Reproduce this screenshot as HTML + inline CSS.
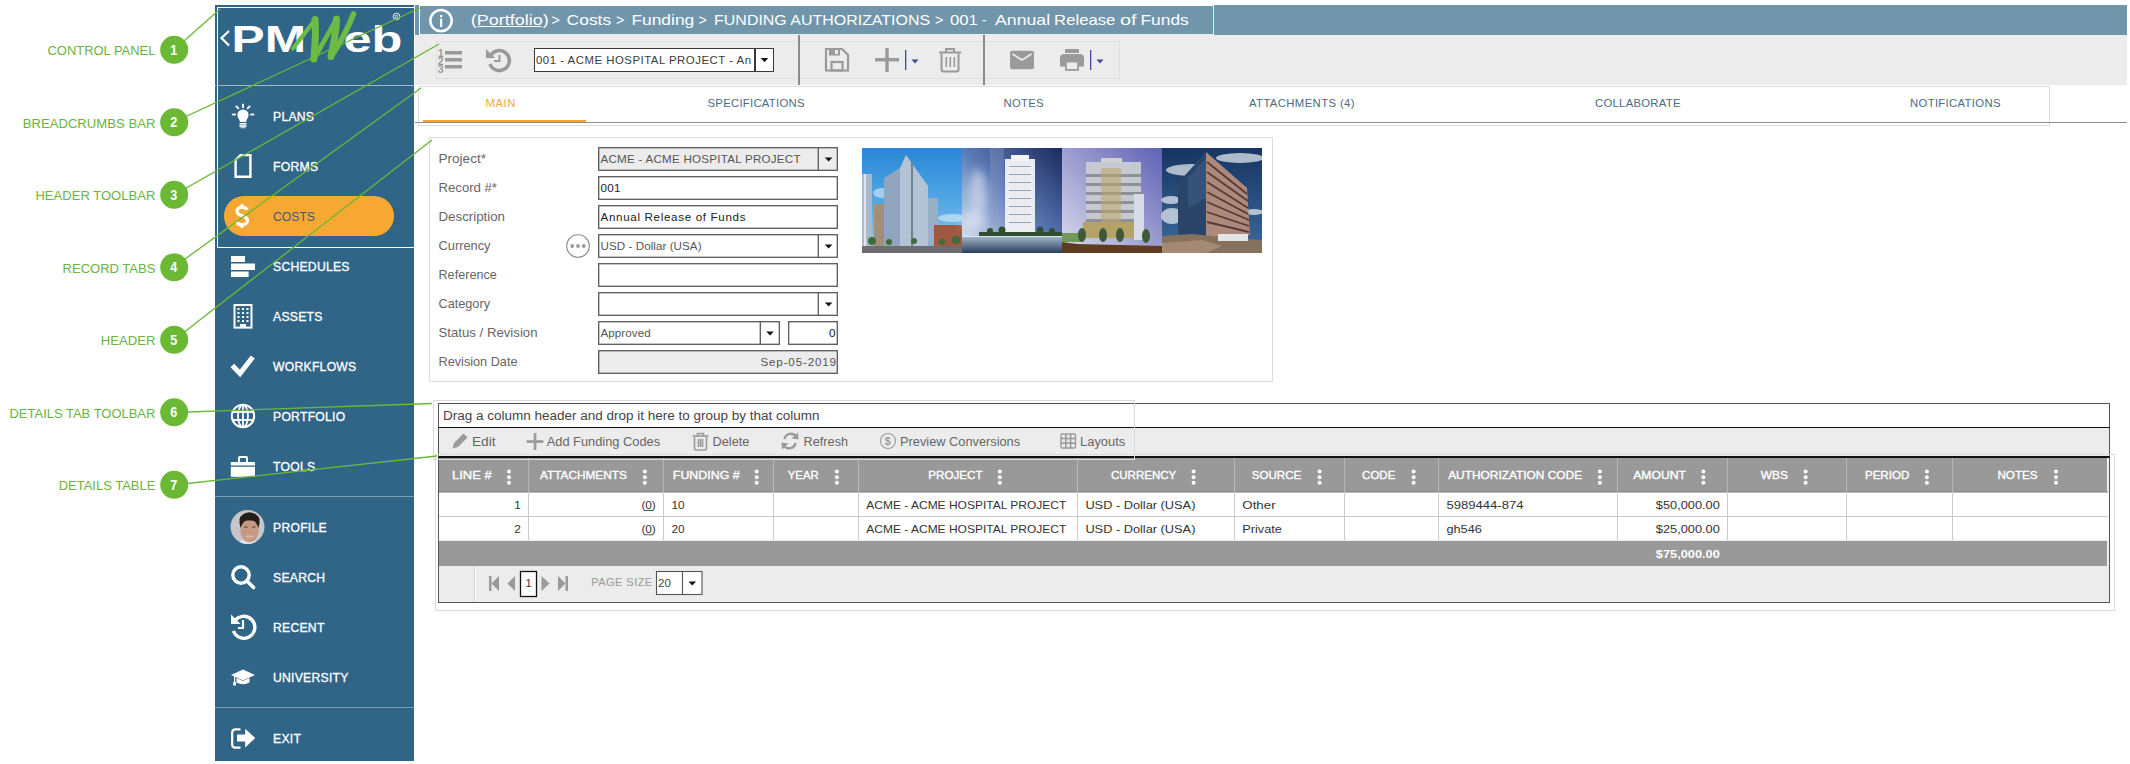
<!DOCTYPE html>
<html><head><meta charset="utf-8">
<style>
*{box-sizing:border-box;margin:0;padding:0}
html,body{width:2130px;height:764px;overflow:hidden;background:#fff}
body{position:relative;font-family:"Liberation Sans",sans-serif;color:#333}
.a{position:absolute}
.t{position:absolute;white-space:nowrap;line-height:1}
/* annotations */
.lbl{position:absolute;right:1975px;color:#6cb33f;font-size:14px;white-space:nowrap;line-height:1;letter-spacing:-0.2px}
.num{position:absolute;z-index:5;left:160px;width:28px;height:28px;border-radius:50%;background:#6cb33f;color:#fff;font-weight:bold;font-size:15px;text-align:center;line-height:28px}
/* sidebar */
#sb{position:absolute;left:215px;top:5px;width:199px;height:756px;background:#316588}
.mi{position:absolute;left:273px;color:#fff;font-weight:normal;-webkit-text-stroke:0.3px #fff;font-size:12.2px;letter-spacing:0.25px;line-height:1;white-space:nowrap}
.ic{position:absolute;left:12px;width:30px;height:30px}
/* breadcrumb */
.bc{background:#7196ab}
/* toolbar */
#tb{position:absolute;left:415px;top:34px;width:1712px;height:51px;background:#ececec}
/* tabs */
.tab{position:absolute;top:98px;color:#4a6c84;font-size:11px;line-height:1;white-space:nowrap;letter-spacing:0.3px}
/* form */
.fl{position:absolute;left:438px;color:#555;font-size:12px;line-height:1;white-space:nowrap}
.inp{position:absolute;left:598px;width:240px;height:23px;border:1px solid #444;background:#fff;font-size:11.5px;line-height:21px;padding-left:2px;color:#333;white-space:nowrap;overflow:hidden}
.dd{position:absolute;top:0;right:0;width:19px;height:21px;border-left:1px solid #444}
.dd:after{content:"";position:absolute;left:5px;top:8px;border-left:4px solid transparent;border-right:4px solid transparent;border-top:5px solid #222}
/* grid */
.gh{position:absolute;top:458px;height:34px;background:#999;}
.ght{position:absolute;top:470px;color:#fff;font-weight:bold;font-size:11px;line-height:1;white-space:nowrap}
.keb{position:absolute;top:470px;width:4px;height:15px}
.cell{position:absolute;font-size:11px;line-height:1;color:#222;white-space:nowrap}
</style></head>
<body>

<!-- ============ ANNOTATIONS ============ -->
<svg class="a" style="left:0;top:0" width="215" height="520"><g font-family="Liberation Sans" font-size="13.6" fill="#6cb33f">
 <text x="47.5" y="55.1" textLength="107.9" lengthAdjust="spacingAndGlyphs">CONTROL PANEL</text>
 <text x="22.7" y="127.6" textLength="132.7" lengthAdjust="spacingAndGlyphs">BREADCRUMBS BAR</text>
 <text x="35.4" y="200.1" textLength="120.0" lengthAdjust="spacingAndGlyphs">HEADER TOOLBAR</text>
 <text x="62.6" y="272.6" textLength="92.8" lengthAdjust="spacingAndGlyphs">RECORD TABS</text>
 <text x="100.7" y="345.1" textLength="54.7" lengthAdjust="spacingAndGlyphs">HEADER</text>
 <text x="9.5" y="417.6" textLength="145.9" lengthAdjust="spacingAndGlyphs">DETAILS TAB TOOLBAR</text>
 <text x="58.7" y="490.1" textLength="96.7" lengthAdjust="spacingAndGlyphs">DETAILS TABLE</text>
</g></svg>

<!-- ============ SIDEBAR ============ -->
<div id="sb"></div>
<svg class="a" style="left:0;top:0;pointer-events:none" width="2130" height="764">
<!-- white frame -->
<rect x="217.5" y="7.5" width="197" height="240" fill="none" stroke="#fff" stroke-width="1"/>
<line x1="215" y1="85.5" x2="414" y2="85.5" stroke="#9fb7c6" stroke-width="1"/>
<line x1="215" y1="496.5" x2="414" y2="496.5" stroke="#7f9fb5" stroke-width="1"/>
<line x1="215" y1="707.5" x2="414" y2="707.5" stroke="#7f9fb5" stroke-width="1"/>
<!-- logo -->
<polyline points="229,31 221.5,38 229,45.5" fill="none" stroke="#fff" stroke-width="2.2"/>
<text x="231.5" y="51.8" font-family="Liberation Sans" font-weight="bold" font-size="36.5" fill="#fff" textLength="74.5" lengthAdjust="spacingAndGlyphs">PM</text>
<text x="343.5" y="51.8" font-family="Liberation Sans" font-weight="bold" font-size="36.5" fill="#fff" textLength="59" lengthAdjust="spacingAndGlyphs">eb</text>
<g fill="none" stroke="#6cbb45" stroke-linecap="round" stroke-linejoin="round">
 <path d="M293,48.5 L314.5,20.5" stroke-width="4.2"/>
 <path d="M315,19.5 C316.5,33 314.5,49 313.8,59" stroke-width="7"/>
 <path d="M314.5,58 L336,20" stroke-width="4.6"/>
 <path d="M336.5,19 C336.5,33 332.5,47 331,56.5" stroke-width="7"/>
 <path d="M331.5,56 C341,42 348,28 353.5,14" stroke-width="5.6"/>
</g>
<circle cx="396.5" cy="16.5" r="3.3" fill="none" stroke="#fff" stroke-width="0.9"/>
<text x="394.6" y="18.6" font-family="Liberation Sans" font-size="5" fill="#fff">R</text>
<!-- costs pill -->
<rect x="224" y="196" width="170" height="40" rx="20" fill="#f6a832"/>
<!-- icons -->
<g fill="#fff">
 <!-- bulb -->
 <circle cx="243" cy="115" r="5.6"/>
 <path d="M238,116 L240,122 L246,122 L248,116 Z"/>
 <rect x="239.5" y="123" width="7" height="1.6"/>
 <rect x="239.5" y="125.2" width="7" height="1.6"/>
 <rect x="240.5" y="127.3" width="5" height="0.9"/>
 <rect x="242" y="103.8" width="2" height="4"/>
 <rect x="231.8" y="113.6" width="4" height="1.8"/>
 <rect x="250.2" y="113.6" width="4" height="1.8"/>
 <path d="M235.2,106.5 l1.3,-1.3 l3,3 l-1.3,1.3z"/>
 <path d="M250.8,106.5 l-1.3,-1.3 l-3,3 l1.3,1.3z"/>
 <!-- schedules -->
 <rect x="231" y="256" width="14" height="6"/>
 <rect x="231" y="263.5" width="24" height="6.5"/>
 <rect x="231" y="271.5" width="17.6" height="5.5"/>
 <!-- toolbox -->
 <path d="M238,462 v-4.2 q0,-1.8 1.8,-1.8 h6.4 q1.8,0 1.8,1.8 v4.2 h-2 v-4 h-6 v4z"/>
 <rect x="230.8" y="462" width="24.2" height="3.5"/>
 <rect x="230.8" y="466.8" width="24.2" height="10"/>
</g>
<g fill="none" stroke="#fff">
 <!-- forms doc -->
 <path d="M235.6,160 L240.5,155.1 L250.4,155.1 L250.4,176.8 L235.6,176.8 Z" stroke-width="2.4"/>
 <!-- assets building -->
 <rect x="234.5" y="305" width="17" height="22.6" stroke-width="2"/>
 <!-- check -->
 <polyline points="232.3,365.5 240,373.5 252.8,357" stroke-width="5"/>
 <!-- globe -->
 <circle cx="243" cy="416" r="11.2" stroke-width="2"/>
 <ellipse cx="243" cy="416" rx="5" ry="11.2" stroke-width="1.8"/>
 <line x1="243" y1="405" x2="243" y2="427" stroke-width="1.8"/>
 <line x1="232" y1="412" x2="254" y2="412" stroke-width="1.8"/>
 <line x1="232" y1="420" x2="254" y2="420" stroke-width="1.8"/>
 <!-- search -->
 <circle cx="241" cy="575" r="8.2" stroke-width="3.4"/>
 <line x1="247" y1="581" x2="253.5" y2="587.5" stroke-width="3.6" stroke-linecap="round"/>
 <!-- recent -->
 <path d="M234.5,621.5 A11,11 0 1 1 233.5,631" stroke-width="3.4"/>
 <polyline points="243,620 243,628 238,628" stroke-width="2.2"/>
 <!-- exit -->
 <path d="M240.5,729.3 h-5 q-3.3,0 -3.3,3.3 v11.8 q0,3.3 3.3,3.3 h5" stroke-width="2.2"/>
</g>
<g fill="#fff">
 <!-- assets windows -->
 <g>
 <rect x="237.5" y="308" width="2" height="2"/><rect x="242" y="308" width="2" height="2"/><rect x="246.5" y="308" width="2" height="2"/>
 <rect x="237.5" y="312" width="2" height="2"/><rect x="242" y="312" width="2" height="2"/><rect x="246.5" y="312" width="2" height="2"/>
 <rect x="237.5" y="316" width="2" height="2"/><rect x="242" y="316" width="2" height="2"/><rect x="246.5" y="316" width="2" height="2"/>
 <rect x="237.5" y="320" width="2" height="2"/><rect x="242" y="320" width="2" height="2"/><rect x="246.5" y="320" width="2" height="2"/>
 <rect x="240" y="324" width="6" height="4"/>
 </g>
 <!-- recent arrow -->
 <path d="M231,614.5 L231,624 L240.5,624 Z"/>
 <!-- grad cap -->
 <path d="M231,675 L243,669.5 L255,675 L243,680.5 Z"/>
 <path d="M236.5,678 v4.5 q6.5,3.5 13,0 v-4.5 l-6.5,3 z"/>
 <rect x="234" y="676" width="1.2" height="7"/>
 <rect x="233.2" y="682" width="2.8" height="3.5"/>
 <!-- exit arrow -->
 <path d="M237,734.6 h8.2 v-5.9 l10,9.4 l-10,9.4 v-5.9 h-8.2 z"/>
</g>
<!-- dollar -->
<path d="M247.2,209.8 C246,207.8 244.2,207.2 242,207.2 C238.8,207.2 237,209 237,211.3 C237,214 239.5,215 242,215.8 C245,216.7 247.5,217.8 247.5,220.6 C247.5,223.2 245.2,224.8 242,224.8 C239.2,224.8 237.2,223.6 236.2,221.5" fill="none" stroke="#fff" stroke-width="3.2"/>
<rect x="240.6" y="204" width="2.8" height="4" fill="#fff"/><rect x="240.6" y="224" width="2.8" height="4" fill="#fff"/>
<!-- avatar -->
<defs><clipPath id="av"><circle cx="247.5" cy="527" r="17"/></clipPath></defs>
<g clip-path="url(#av)">
 <rect x="229" y="509" width="38" height="37" fill="#c6c6ca"/>
 <path d="M236,548 q2,-9 12,-9 q10,0 12,9z" fill="#dfe5ec"/>
 <ellipse cx="249.5" cy="523" rx="10" ry="10.5" fill="#231d1b"/>
 <ellipse cx="249.5" cy="531" rx="9.2" ry="11.3" fill="#c49a84"/>
 <path d="M240,524 q0,-6 9.5,-6.5 q9.5,0.5 9.5,6.5 l0.5,-5 q-2,-6 -10,-6.5 q-8,0.5 -10,6.5z" fill="#231d1b"/>
 <rect x="240" y="517" width="19" height="3.5" fill="#231d1b"/>
 <ellipse cx="249.5" cy="536.5" rx="4" ry="1.3" fill="#d9b3a3"/>
 <rect x="244" y="526.5" width="3.5" height="1.2" fill="#6a4a40"/><rect x="252" y="526.5" width="3.5" height="1.2" fill="#6a4a40"/>
</g>
</svg>
<div class="mi" style="top:111.0px">PLANS</div>
<div class="mi" style="top:160.6px">FORMS</div>
<div class="mi" style="top:210.6px;color:#45597a;-webkit-text-stroke:0;letter-spacing:0">COSTS</div>
<div class="mi" style="top:260.6px">SCHEDULES</div>
<div class="mi" style="top:310.6px">ASSETS</div>
<div class="mi" style="top:360.6px">WORKFLOWS</div>
<div class="mi" style="top:410.6px">PORTFOLIO</div>
<div class="mi" style="top:460.6px">TOOLS</div>
<div class="mi" style="top:522.2px">PROFILE</div>
<div class="mi" style="top:572.2px">SEARCH</div>
<div class="mi" style="top:622.2px">RECENT</div>
<div class="mi" style="top:672.2px">UNIVERSITY</div>
<div class="mi" style="top:733.2px">EXIT</div>


<!-- ============ BREADCRUMB ============ -->
<div id="tb"></div>

<div class="a bc" style="left:415px;top:5px;width:4px;height:30px"></div>
<div class="a bc" style="left:420px;top:6px;width:793px;height:28px"></div>
<div class="a" style="left:1213px;top:6px;width:1px;height:28px;background:#e6e6e6"></div>
<div class="a bc" style="left:1214px;top:5px;width:913px;height:30px"></div>

<!-- ============ TOOLBAR ============ -->
<!-- toolbar groups -->
<div class="a" style="left:436px;top:41px;width:364px;height:38px;border:1px solid #dedede"></div>
<div class="a" style="left:799px;top:41px;width:321px;height:38px;border:1px solid #dedede;border-left:none"></div>
<div class="a" style="left:798px;top:35px;width:1.5px;height:50px;background:#8c8c8c"></div>
<div class="a" style="left:983px;top:35px;width:1.5px;height:50px;background:#8c8c8c"></div>
<div class="a" style="left:415px;top:85px;width:1712px;height:1px;background:#fafafa"></div>
<!-- record dropdown -->
<div class="a" style="left:534px;top:48px;width:240px;height:24px;border:1.5px solid #3a3a3a;background:#fff"></div>
<div class="a" style="left:754px;top:49px;width:1.5px;height:22px;background:#3a3a3a"></div>
<svg class="a" style="left:0;top:0" width="2130" height="130">
 <path d="M760.8,58 h7.4 l-3.7,4.2z" fill="#111"/>
 <text x="536" y="64" font-family="Liberation Sans" font-size="11.4" fill="#3a3a3a" textLength="215" lengthAdjust="spacing">001 - ACME HOSPITAL PROJECT - An</text>
 <!-- numbered list -->
 <g fill="#9a9a9a">
  <text x="437.8" y="57.0" font-family="Liberation Sans" font-weight="bold" font-size="10.5" textLength="6">1</text>
  <text x="437.8" y="65.0" font-family="Liberation Sans" font-weight="bold" font-size="10.5" textLength="6">2</text>
  <text x="437.8" y="73.0" font-family="Liberation Sans" font-weight="bold" font-size="10.5" textLength="6">3</text>
  <rect x="445" y="51" width="17" height="3.5"/>
  <rect x="445" y="58" width="17" height="3.5"/>
  <rect x="445" y="65" width="17" height="3.5"/>
 </g>
 <!-- history -->
 <g fill="none" stroke="#9a9a9a">
  <path d="M490.5,56 A10,10 0 1 1 490,64" stroke-width="3.6"/>
  <polyline points="499.5,55 499.5,61 494,61" stroke-width="2"/>
 </g>
 <path d="M486,49 L486,58 L495,58 Z" fill="#9a9a9a"/>
 <!-- save -->
 <g fill="none" stroke="#9a9a9a" stroke-width="2.2">
  <path d="M826,49 h16 l6,6 v15.5 h-22 z"/>
  <rect x="831.5" y="62" width="11" height="8.5"/>
 </g>
 <rect x="829" y="49" width="11" height="6.5" fill="#9a9a9a"/>
 <rect x="835" y="50" width="3" height="4" fill="#ececec"/>
 <!-- plus -->
 <rect x="875" y="58" width="24" height="3.4" fill="#9a9a9a"/>
 <rect x="885.3" y="48" width="3.4" height="24" fill="#9a9a9a"/>
 <rect x="905" y="50" width="1.3" height="20" fill="#3d4a9a"/>
 <path d="M911.5,59.5 h7 l-3.5,4z" fill="#3d4a9a"/>
 <!-- trash -->
 <g fill="none" stroke="#9a9a9a" stroke-width="2">
  <path d="M941.5,53.5 v16 q0,2 2,2 h13 q2,0 2,-2 v-16"/>
  <line x1="939" y1="52.5" x2="961" y2="52.5"/>
  <path d="M946,52 v-3 h8 v3"/>
  <line x1="946.3" y1="57" x2="946.3" y2="67" stroke-width="1.6"/>
  <line x1="950.3" y1="57" x2="950.3" y2="67" stroke-width="1.6"/>
  <line x1="954.3" y1="57" x2="954.3" y2="67" stroke-width="1.6"/>
 </g>
 <!-- mail -->
 <rect x="1010" y="50.7" width="24" height="18.6" rx="2.2" fill="#9a9a9a"/>
 <polyline points="1012.5,54 1022,60 1031.5,54" fill="none" stroke="#ececec" stroke-width="1.6"/>
 <!-- print -->
 <rect x="1065" y="49" width="14" height="4" fill="#9a9a9a"/>
 <path d="M1060,58 q0,-4 4,-4 h16 q4,0 4,4 v8.5 h-24z" fill="#9a9a9a"/>
 <rect x="1065" y="62" width="14" height="8.8" fill="#9a9a9a"/>
 <rect x="1066.8" y="62.5" width="10.4" height="6.5" fill="#ececec"/>
 <rect x="1090" y="50" width="1.3" height="20" fill="#3d4a9a"/>
 <path d="M1096.5,59.5 h7 l-3.5,4z" fill="#3d4a9a"/>
 <!-- info icon -->
 <circle cx="441" cy="20.6" r="10.7" fill="none" stroke="#fff" stroke-width="2.5"/>
 <rect x="440" y="15" width="2.2" height="2.4" fill="#fff"/>
 <rect x="440" y="18.8" width="2.2" height="8.2" fill="#fff"/>
 <!-- breadcrumb text -->
 <g font-family="Liberation Sans" font-size="14.4" fill="#fff">
  <text x="470.8" y="24.8" textLength="77.9" lengthAdjust="spacingAndGlyphs">(Portfolio)</text>
  <text x="551.4" y="24.8">&gt;</text>
  <text x="566.6" y="24.8" textLength="44.6" lengthAdjust="spacingAndGlyphs">Costs</text>
  <text x="616.1" y="24.8">&gt;</text>
  <text x="631.4" y="24.8" textLength="62.9" lengthAdjust="spacingAndGlyphs">Funding</text>
  <text x="698.4" y="24.8">&gt;</text>
  <text x="714.1" y="24.8" textLength="216.0" lengthAdjust="spacingAndGlyphs">FUNDING AUTHORIZATIONS</text>
  <text x="934.9" y="24.8">&gt;</text>
  <text x="949.9" y="24.8" textLength="27.9" lengthAdjust="spacingAndGlyphs">001</text>
  <text x="981.8" y="24.8">-</text>
  <text x="995.0" y="24.8" textLength="55.1" lengthAdjust="spacingAndGlyphs">Annual</text>
  <text x="1054.1" y="24.8" textLength="61.3" lengthAdjust="spacingAndGlyphs">Release</text>
  <text x="1119.9" y="24.8" textLength="16.6" lengthAdjust="spacingAndGlyphs">of</text>
  <text x="1140.5" y="24.8" textLength="48.2" lengthAdjust="spacingAndGlyphs">Funds</text>
 </g>
 <line x1="477.5" y1="26.5" x2="541.5" y2="26.5" stroke="#fff" stroke-width="1"/>
</svg>
<!-- tabs -->
<div class="a" style="left:418px;top:86px;width:1632px;height:40px;border:1px solid #dcdcdc;border-bottom-color:#dcdcdc;background:#fff"></div>
<div class="a" style="left:415px;top:122px;width:1712px;height:1px;background:#8e8e8e"></div>
<div class="a" style="left:423px;top:120px;width:163px;height:2px;background:#f5a231"></div>
<svg class="a" style="left:0;top:80px" width="2130" height="40">
 <g font-family="Liberation Sans" font-size="11.3" fill="#4a6d86">
  <text x="485.5" y="27.2" fill="#f5a54a" textLength="30" lengthAdjust="spacing">MAIN</text>
  <text x="707.5" y="27.2" textLength="97" lengthAdjust="spacing">SPECIFICATIONS</text>
  <text x="1003.5" y="27.2" textLength="40" lengthAdjust="spacing">NOTES</text>
  <text x="1249" y="27.2" textLength="105.5" lengthAdjust="spacing">ATTACHMENTS (4)</text>
  <text x="1595" y="27.2" textLength="85.5" lengthAdjust="spacing">COLLABORATE</text>
  <text x="1910" y="27.2" textLength="90.5" lengthAdjust="spacing">NOTIFICATIONS</text>
 </g>
</svg>



<!-- ============ FORM HEADER ============ -->
<div class="a" style="left:429px;top:137px;width:844px;height:245px;border:1px solid #dcdcdc;background:#fff"></div>
<svg class="a" style="left:0;top:130px" width="1300" height="260">
<g font-family="Liberation Sans" font-size="12.2" fill="#666">
 <text x="438.5" y="33.1" textLength="47.5" lengthAdjust="spacingAndGlyphs">Project*</text>
 <text x="438.5" y="62" textLength="58.5" lengthAdjust="spacingAndGlyphs">Record #*</text>
 <text x="438.5" y="91" textLength="66.5" lengthAdjust="spacingAndGlyphs">Description</text>
 <text x="438.5" y="120" textLength="52" lengthAdjust="spacingAndGlyphs">Currency</text>
 <text x="438.5" y="149" textLength="58.3" lengthAdjust="spacingAndGlyphs">Reference</text>
 <text x="438.5" y="178" textLength="51.5" lengthAdjust="spacingAndGlyphs">Category</text>
 <text x="438.5" y="207" textLength="99" lengthAdjust="spacingAndGlyphs">Status / Revision</text>
 <text x="438.5" y="236" textLength="79" lengthAdjust="spacingAndGlyphs">Revision Date</text>
</g>
<!-- inputs -->
<g stroke="#5a5a5a" stroke-width="1.3">
 <rect x="598.7" y="17.7" width="238.6" height="22.6" fill="#ececec"/>
 <rect x="598.7" y="46.7" width="238.6" height="22.6" fill="#fff"/>
 <rect x="598.7" y="75.7" width="238.6" height="22.6" fill="#fff"/>
 <rect x="598.7" y="104.7" width="238.6" height="22.6" fill="#fff"/>
 <rect x="598.7" y="133.7" width="238.6" height="22.6" fill="#fff"/>
 <rect x="598.7" y="162.7" width="238.6" height="22.6" fill="#fff"/>
 <rect x="598.7" y="191.7" width="180.6" height="22.6" fill="#fff"/>
 <rect x="788.7" y="191.7" width="48.6" height="22.6" fill="#fff"/>
 <rect x="598.7" y="220.7" width="238.6" height="22.6" fill="#ececec"/>
 <line x1="818.3" y1="18" x2="818.3" y2="40"/>
 <line x1="818.3" y1="105" x2="818.3" y2="127"/>
 <line x1="818.3" y1="163" x2="818.3" y2="185"/>
 <line x1="760.3" y1="192" x2="760.3" y2="214"/>
</g>
<g fill="#111">
 <path d="M824.8,27.6 h7.6 l-3.8,4z"/>
 <path d="M824.8,114.6 h7.6 l-3.8,4z"/>
 <path d="M824.8,172.6 h7.6 l-3.8,4z"/>
 <path d="M766.2,201.6 h7.6 l-3.8,4z"/>
</g>
<g font-family="Liberation Sans" font-size="11.6">
 <text x="600.5" y="33.1" fill="#555" textLength="200" lengthAdjust="spacing">ACME - ACME HOSPITAL PROJECT</text>
 <text x="600.5" y="62" fill="#222" textLength="20" lengthAdjust="spacing">001</text>
 <text x="600.5" y="91" fill="#222" textLength="145" lengthAdjust="spacing">Annual Release of Funds</text>
 <text x="600.5" y="120" fill="#555" textLength="101" lengthAdjust="spacing">USD - Dollar (USA)</text>
 <text x="600.5" y="207" fill="#555" textLength="50.2" lengthAdjust="spacing">Approved</text>
 <text x="835.5" y="207" fill="#222" text-anchor="end">0</text>
 <text x="760.5" y="236" fill="#555" textLength="75.5" lengthAdjust="spacing">Sep-05-2019</text>
</g>
<!-- ellipsis button -->
<circle cx="578" cy="116" r="11.3" fill="#fff" stroke="#8c8c8c" stroke-width="1.1"/>
<circle cx="572.2" cy="116" r="1.9" fill="#9a9a9a"/>
<circle cx="578" cy="116" r="1.9" fill="#9a9a9a"/>
<circle cx="583.8" cy="116" r="1.9" fill="#9a9a9a"/>
</svg>
<!-- images -->
<svg class="a" style="left:862px;top:148px" width="400" height="105">
<defs>
 <filter id="bl" x="-50%" y="-50%" width="200%" height="200%"><feGaussianBlur stdDeviation="4"/></filter>
 <linearGradient id="s1" x1="0" y1="0" x2="0" y2="1"><stop offset="0" stop-color="#2a86d6"/><stop offset="0.6" stop-color="#5aaee6"/><stop offset="1" stop-color="#9ccbe9"/></linearGradient>
 <linearGradient id="s2" x1="1" y1="0" x2="0" y2="1"><stop offset="0" stop-color="#1c2a5c"/><stop offset="0.5" stop-color="#5b7ab8"/><stop offset="1" stop-color="#e6eef8"/></linearGradient>
 <linearGradient id="s3" x1="1" y1="0" x2="0" y2="1"><stop offset="0" stop-color="#5e62b4"/><stop offset="0.6" stop-color="#aaaad6"/><stop offset="1" stop-color="#dcdcec"/></linearGradient>
 <linearGradient id="s4" x1="0" y1="0" x2="0" y2="1"><stop offset="0" stop-color="#173462"/><stop offset="1" stop-color="#3d6a9a"/></linearGradient>
 <linearGradient id="g1" x1="0" y1="0" x2="1" y2="0"><stop offset="0" stop-color="#8ea8c4"/><stop offset="0.55" stop-color="#b7c8da"/><stop offset="1" stop-color="#7d98b6"/></linearGradient>
 <linearGradient id="w2" x1="0" y1="0" x2="0" y2="1"><stop offset="0" stop-color="#9fb2c8"/><stop offset="1" stop-color="#2a3d5c"/></linearGradient>
</defs>
<!-- img1 -->
<rect x="0" y="0" width="100" height="105" fill="url(#s1)"/>
<g fill="#e8f2fa" opacity="0.55"><ellipse cx="90" cy="70" rx="14" ry="4"/><ellipse cx="20" cy="45" rx="9" ry="5"/></g>
<rect x="0" y="26" width="10" height="79" fill="#a9bacd"/>
<rect x="2" y="26" width="2" height="79" fill="#dfe6ee"/>
<rect x="12" y="56" width="10" height="46" fill="#a09078"/>
<path d="M22,30 L38,20 L38,100 L22,100 Z" fill="#8fa5be"/>
<path d="M38,20 L44,7 L66,38 L66,100 L38,100 Z" fill="#b2c3d6"/>
<rect x="49" y="14" width="2" height="86" fill="#6f8296"/>
<rect x="66" y="50" width="10" height="50" fill="#98b0c6"/>
<rect x="72" y="77" width="28" height="24" fill="#9e5a40"/>
<rect x="0" y="98" width="100" height="7" fill="#6e6c70"/>
<g fill="#3f6a3a"><circle cx="10" cy="93" r="4"/><circle cx="27" cy="94" r="3"/><circle cx="52" cy="93" r="3"/><circle cx="80" cy="94" r="3"/><circle cx="94" cy="92" r="4"/></g>
<!-- img2 -->
<rect x="100" y="0" width="100" height="105" fill="url(#s2)"/>
<rect x="143" y="11" width="30" height="79" fill="#e9edf2"/>
<rect x="149" y="7" width="18" height="6" fill="#f2f4f6"/>
<g fill="#9aa6b6"><rect x="147" y="18" width="22" height="1"/><rect x="147" y="26" width="22" height="1"/><rect x="147" y="34" width="22" height="1"/><rect x="147" y="42" width="22" height="1"/><rect x="147" y="50" width="22" height="1"/><rect x="147" y="58" width="22" height="1"/><rect x="147" y="66" width="22" height="1"/><rect x="147" y="74" width="22" height="1"/></g>
<rect x="128" y="0" width="14" height="105" fill="#8f9fc0" opacity="0.35"/><g fill="#eef3fa" opacity="0.5" filter="url(#bl)"><ellipse cx="116" cy="45" rx="9" ry="24"/><ellipse cx="112" cy="72" rx="12" ry="10"/></g>
<g fill="#2f4f30"><rect x="117" y="84" width="83" height="5"/><circle cx="128" cy="83" r="3"/><circle cx="140" cy="82" r="3.5"/><circle cx="178" cy="82" r="3.5"/><circle cx="190" cy="83" r="3"/></g><rect x="100" y="88" width="100" height="2" fill="#dfe6ee"/>
<rect x="100" y="89" width="100" height="16" fill="url(#w2)"/>
<!-- img3 -->
<rect x="200" y="0" width="100" height="105" fill="url(#s3)"/>
<rect x="200" y="85" width="20" height="9" fill="#6f9a5a"/>
<rect x="224" y="14" width="55" height="72" fill="#c7c9d2"/>
<rect x="239" y="10" width="21" height="5" fill="#cfd0d4"/>
<g fill="#8e9096"><rect x="224" y="26" width="55" height="3"/><rect x="224" y="35" width="55" height="3"/><rect x="224" y="44" width="55" height="3"/><rect x="224" y="53" width="55" height="3"/><rect x="224" y="62" width="55" height="3"/><rect x="224" y="71" width="55" height="3"/></g>
<rect x="239" y="20" width="20" height="56" fill="#b9a86e" opacity="0.55"/>
<rect x="221" y="74" width="51" height="16" fill="#b5a268"/>
<rect x="272" y="46" width="10" height="46" fill="#d6dbe6"/>
<g fill="#3f5a3a"><ellipse cx="220" cy="87" rx="4" ry="7"/><ellipse cx="241" cy="87" rx="4" ry="7"/><ellipse cx="258" cy="87" rx="4" ry="7"/><ellipse cx="284" cy="88" rx="4" ry="7"/></g>
<path d="M200,94 L215,96 L300,98 L300,105 L200,105Z" fill="#5e3c22"/>
<!-- img4 -->
<rect x="300" y="0" width="100" height="105" fill="url(#s4)"/>
<g fill="#dfe6ee" opacity="0.75"><ellipse cx="330" cy="22" rx="26" ry="6"/><ellipse cx="378" cy="10" rx="24" ry="5"/><ellipse cx="309" cy="52" rx="10" ry="4"/><ellipse cx="310" cy="68" rx="11" ry="8"/><ellipse cx="392" cy="64" rx="9" ry="3"/></g>
<path d="M344,4 L316,35 L316,90 L344,92 Z" fill="#2b4569"/>
<path d="M326,30 L344,10 L344,50 L326,60Z" fill="#3f5c84" opacity="0.6"/>
<path d="M344,4 L385,40 L388,87 L344,92 Z" fill="#ad897c"/>
<g stroke="#553a36" stroke-width="1.8"><line x1="345" y1="14" x2="385" y2="46"/><line x1="345" y1="24" x2="386" y2="53"/><line x1="345" y1="34" x2="386" y2="60"/><line x1="345" y1="44" x2="386" y2="66"/><line x1="345" y1="54" x2="387" y2="72"/><line x1="345" y1="64" x2="387" y2="78"/><line x1="345" y1="74" x2="387" y2="84"/></g>
<path d="M300,88 L330,86 L370,90 L400,92 L400,105 L300,105Z" fill="#86705e"/>
<path d="M300,95 L340,92 L360,98 L345,105 L300,105Z" fill="#a48a70"/>
<rect x="356" y="86" width="30" height="7" fill="#e4e4e6"/>
</svg>


<!-- ============ DETAILS GRID ============ -->
<div class="a" style="left:438px;top:403px;width:1672px;height:25px;border:1px solid #555;border-bottom:1.5px solid #111;background:#fff"></div>
<div class="a" style="left:438px;top:428px;width:1672px;height:30px;background:#ececec;border-left:1px solid #555;border-right:1px solid #555;border-bottom:2px solid #111"></div>
<div class="a" style="left:434.5px;top:454px;width:1680px;height:157px;border:1px solid #dcdcdc"></div>
<div class="a" style="left:438px;top:458px;width:1672px;height:145px;background:#ececec;border:1px solid #555;border-top:none"></div>
<div class="a" style="left:439px;top:458px;width:1669px;height:34px;background:#999;border-right:1px solid #f4f4f4"></div>
<div class="a" style="left:439px;top:492px;width:1670px;height:48px;background:#fff"></div>
<div class="a" style="left:439px;top:540.5px;width:1669px;height:25px;background:#999;border-right:1px solid #f4f4f4"></div>
<svg class="a" style="left:0;top:390px" width="2130" height="230">
<g stroke="#c9c9c9" stroke-width="1">
 <line x1="439" y1="126.5" x2="2108" y2="126.5"/>
 <line x1="439" y1="102" x2="2108" y2="102" stroke="#7a7a7a"/>

 <line x1="528.5" y1="68" x2="528.5" y2="102" stroke="#b5b5b5"/>
 <line x1="528.5" y1="102" x2="528.5" y2="150"/>
 <line x1="663.5" y1="68" x2="663.5" y2="102" stroke="#b5b5b5"/>
 <line x1="663.5" y1="102" x2="663.5" y2="150"/>
 <line x1="773.5" y1="68" x2="773.5" y2="102" stroke="#b5b5b5"/>
 <line x1="773.5" y1="102" x2="773.5" y2="150"/>
 <line x1="858.5" y1="68" x2="858.5" y2="102" stroke="#b5b5b5"/>
 <line x1="858.5" y1="102" x2="858.5" y2="150"/>
 <line x1="1077.5" y1="68" x2="1077.5" y2="102" stroke="#b5b5b5"/>
 <line x1="1077.5" y1="102" x2="1077.5" y2="150"/>
 <line x1="1234.5" y1="68" x2="1234.5" y2="102" stroke="#b5b5b5"/>
 <line x1="1234.5" y1="102" x2="1234.5" y2="150"/>
 <line x1="1344.5" y1="68" x2="1344.5" y2="102" stroke="#b5b5b5"/>
 <line x1="1344.5" y1="102" x2="1344.5" y2="150"/>
 <line x1="1438.5" y1="68" x2="1438.5" y2="102" stroke="#b5b5b5"/>
 <line x1="1438.5" y1="102" x2="1438.5" y2="150"/>
 <line x1="1617.5" y1="68" x2="1617.5" y2="102" stroke="#b5b5b5"/>
 <line x1="1617.5" y1="102" x2="1617.5" y2="150"/>
 <line x1="1727.5" y1="68" x2="1727.5" y2="102" stroke="#b5b5b5"/>
 <line x1="1727.5" y1="102" x2="1727.5" y2="150"/>
 <line x1="1846.5" y1="68" x2="1846.5" y2="102" stroke="#b5b5b5"/>
 <line x1="1846.5" y1="102" x2="1846.5" y2="150"/>
 <line x1="1952.5" y1="68" x2="1952.5" y2="102" stroke="#b5b5b5"/>
 <line x1="1952.5" y1="102" x2="1952.5" y2="150"/>
 <line x1="474.5" y1="176" x2="474.5" y2="212" stroke="#d6d6d6" stroke-width="1"/><line x1="475.5" y1="176" x2="475.5" y2="212" stroke="#fafafa" stroke-width="1"/>
</g>
<g font-family="Liberation Sans" font-size="11.3" fill="#fff" stroke="#fff" stroke-width="0.35">
 <text x="452.1" y="89.2" textLength="39.5" lengthAdjust="spacingAndGlyphs">LINE &#35;</text>
 <text x="540.1" y="89.2" textLength="86.7" lengthAdjust="spacingAndGlyphs">ATTACHMENTS</text>
 <text x="672.8" y="89.2" textLength="66.9" lengthAdjust="spacingAndGlyphs">FUNDING &#35;</text>
 <text x="787.8" y="89.2" textLength="30.9" lengthAdjust="spacingAndGlyphs">YEAR</text>
 <text x="928.3" y="89.2" textLength="54.3" lengthAdjust="spacingAndGlyphs">PROJECT</text>
 <text x="1111.0" y="89.2" textLength="65.2" lengthAdjust="spacingAndGlyphs">CURRENCY</text>
 <text x="1251.8" y="89.2" textLength="49.5" lengthAdjust="spacingAndGlyphs">SOURCE</text>
 <text x="1362.1" y="89.2" textLength="33.2" lengthAdjust="spacingAndGlyphs">CODE</text>
 <text x="1448.2" y="89.2" textLength="133.9" lengthAdjust="spacingAndGlyphs">AUTHORIZATION CODE</text>
 <text x="1633.2" y="89.2" textLength="52.8" lengthAdjust="spacingAndGlyphs">AMOUNT</text>
 <text x="1760.8" y="89.2" textLength="27.0" lengthAdjust="spacingAndGlyphs">WBS</text>
 <text x="1864.9" y="89.2" textLength="44.5" lengthAdjust="spacingAndGlyphs">PERIOD</text>
 <text x="1997.4" y="89.2" textLength="40.2" lengthAdjust="spacingAndGlyphs">NOTES</text>
</g><g fill="#fff">
 <circle cx="509" cy="81.6" r="2"/>
 <circle cx="509" cy="87.2" r="2"/>
 <circle cx="509" cy="92.8" r="2"/>
 <circle cx="644.8" cy="81.6" r="2"/>
 <circle cx="644.8" cy="87.2" r="2"/>
 <circle cx="644.8" cy="92.8" r="2"/>
 <circle cx="756.7" cy="81.6" r="2"/>
 <circle cx="756.7" cy="87.2" r="2"/>
 <circle cx="756.7" cy="92.8" r="2"/>
 <circle cx="836.9" cy="81.6" r="2"/>
 <circle cx="836.9" cy="87.2" r="2"/>
 <circle cx="836.9" cy="92.8" r="2"/>
 <circle cx="999.8" cy="81.6" r="2"/>
 <circle cx="999.8" cy="87.2" r="2"/>
 <circle cx="999.8" cy="92.8" r="2"/>
 <circle cx="1193.6" cy="81.6" r="2"/>
 <circle cx="1193.6" cy="87.2" r="2"/>
 <circle cx="1193.6" cy="92.8" r="2"/>
 <circle cx="1319.6" cy="81.6" r="2"/>
 <circle cx="1319.6" cy="87.2" r="2"/>
 <circle cx="1319.6" cy="92.8" r="2"/>
 <circle cx="1413.6" cy="81.6" r="2"/>
 <circle cx="1413.6" cy="87.2" r="2"/>
 <circle cx="1413.6" cy="92.8" r="2"/>
 <circle cx="1599.9" cy="81.6" r="2"/>
 <circle cx="1599.9" cy="87.2" r="2"/>
 <circle cx="1599.9" cy="92.8" r="2"/>
 <circle cx="1703.4" cy="81.6" r="2"/>
 <circle cx="1703.4" cy="87.2" r="2"/>
 <circle cx="1703.4" cy="92.8" r="2"/>
 <circle cx="1805.6" cy="81.6" r="2"/>
 <circle cx="1805.6" cy="87.2" r="2"/>
 <circle cx="1805.6" cy="92.8" r="2"/>
 <circle cx="1926.9" cy="81.6" r="2"/>
 <circle cx="1926.9" cy="87.2" r="2"/>
 <circle cx="1926.9" cy="92.8" r="2"/>
 <circle cx="2056" cy="81.6" r="2"/>
 <circle cx="2056" cy="87.2" r="2"/>
 <circle cx="2056" cy="92.8" r="2"/>
</g>
<g font-family="Liberation Sans" font-size="11.8" fill="#333">
 <text x="520.8" y="118.7" text-anchor="end">1</text>
 <text x="520.8" y="143" text-anchor="end">2</text>
 <text x="655.8" y="118.7" text-anchor="end" fill="#333">(0)</text>
 <text x="655.8" y="143" text-anchor="end" fill="#333">(0)</text>
 <line x1="644" y1="120.5" x2="653" y2="120.5" stroke="#333" stroke-width="0.8"/>
 <line x1="644" y1="144.8" x2="653" y2="144.8" stroke="#333" stroke-width="0.8"/>
 <text x="671.5" y="118.7">10</text>
 <text x="671.5" y="143">20</text>
 <text x="866.3" y="118.7" textLength="200" lengthAdjust="spacingAndGlyphs">ACME - ACME HOSPITAL PROJECT</text>
 <text x="866.3" y="143" textLength="200" lengthAdjust="spacingAndGlyphs">ACME - ACME HOSPITAL PROJECT</text>
 <text x="1085.4" y="118.7" textLength="110" lengthAdjust="spacingAndGlyphs">USD - Dollar (USA)</text>
 <text x="1085.4" y="143" textLength="110" lengthAdjust="spacingAndGlyphs">USD - Dollar (USA)</text>
 <text x="1242.3" y="118.7" textLength="33.3" lengthAdjust="spacingAndGlyphs">Other</text>
 <text x="1242.3" y="143" textLength="39.5" lengthAdjust="spacingAndGlyphs">Private</text>
 <text x="1446.4" y="118.7" textLength="77.2" lengthAdjust="spacingAndGlyphs">5989444-874</text>
 <text x="1446.4" y="143" textLength="35.5" lengthAdjust="spacingAndGlyphs">gh546</text>
 <text x="1655.8" y="118.7" textLength="64" lengthAdjust="spacingAndGlyphs">$50,000.00</text>
 <text x="1655.8" y="143" textLength="64" lengthAdjust="spacingAndGlyphs">$25,000.00</text>
</g>
<text x="1655.8" y="168.3" font-family="Liberation Sans" font-weight="bold" font-size="11.2" fill="#fff" textLength="64" lengthAdjust="spacingAndGlyphs">$75,000.00</text>
<!-- group panel + toolbar texts -->
<g font-family="Liberation Sans" font-size="12.3" fill="#444">
 <text x="443" y="30.2" textLength="376.5" lengthAdjust="spacingAndGlyphs">Drag a column header and drop it here to group by that column</text>
</g>
<g font-family="Liberation Sans" font-size="12.3" fill="#666">
 <text x="472" y="56.2" textLength="23.5" lengthAdjust="spacingAndGlyphs">Edit</text>
 <text x="546.7" y="56.2" textLength="113.5" lengthAdjust="spacingAndGlyphs">Add Funding Codes</text>
 <text x="712.6" y="56.2" textLength="36.8" lengthAdjust="spacingAndGlyphs">Delete</text>
 <text x="803.6" y="56.2" textLength="44.5" lengthAdjust="spacingAndGlyphs">Refresh</text>
 <text x="900.1" y="56.2" textLength="120" lengthAdjust="spacingAndGlyphs">Preview Conversions</text>
 <text x="1080" y="56.2" textLength="45.3" lengthAdjust="spacingAndGlyphs">Layouts</text>
</g>
<!-- toolbar icons -->
<g fill="#9a9a9a">
 <path d="M452.5,58.5 L454,53 L463.5,43.5 L467.5,47.5 L458,57 Z"/>
 <rect x="533.7" y="43" width="2.7" height="17"/>
 <rect x="526.7" y="50.2" width="16.6" height="2.7"/>
</g>
<g fill="none" stroke="#9a9a9a" stroke-width="1.6">
 <path d="M694.5,47 v11.5 q0,1.5 1.5,1.5 h9 q1.5,0 1.5,-1.5 v-11.5"/>
 <line x1="692.5" y1="46" x2="708.5" y2="46"/>
 <path d="M697.5,45.5 v-2 h6 v2"/>
 <line x1="698.5" y1="49" x2="698.5" y2="57"/><line x1="700.5" y1="49" x2="700.5" y2="57"/><line x1="702.5" y1="49" x2="702.5" y2="57"/>
 <circle cx="888" cy="51" r="7.5" stroke-width="1.1"/>
 <rect x="1061" y="44" width="14.5" height="14" rx="1.2" stroke-width="1.4"/>
 <line x1="1061" y1="48.5" x2="1075.5" y2="48.5"/><line x1="1061" y1="53.2" x2="1075.5" y2="53.2"/>
 <line x1="1065.8" y1="44" x2="1065.8" y2="58"/><line x1="1070.6" y1="44" x2="1070.6" y2="58"/>
</g>
<g fill="none" stroke="#9a9a9a" stroke-width="2.4">
 <path d="M784.5,49 A6.5,6.5 0 0 1 796.5,47"/>
 <path d="M795.5,53 A6.5,6.5 0 0 1 783.5,55"/>
</g>
<g fill="#9a9a9a">
 <path d="M798,42.5 L798.5,49.5 L791.5,48.5Z"/>
 <path d="M782,59.5 L781.5,52.5 L788.5,53.5Z"/>
</g>
<text x="884.7" y="55.3" font-family="Liberation Sans" font-weight="bold" font-size="10.5" fill="#9a9a9a">$</text>
<!-- pager -->
<g fill="#9a9a9a">
 <rect x="489" y="186" width="2.5" height="15"/>
 <path d="M499,186 L499,201 L491.5,193.5Z"/>
 <path d="M515,186 L515,201 L507.5,193.5Z"/>
 <path d="M541.5,186 L541.5,201 L549.5,193.5Z"/>
 <path d="M558,186 L558,201 L565.5,193.5Z"/>
 <rect x="565.5" y="186" width="2.5" height="15"/>
</g>
<rect x="520.5" y="181.5" width="16" height="25" fill="#fff" stroke="#111" stroke-width="1.3"/>
<text x="528.6" y="197" font-family="Liberation Sans" font-size="11" fill="#333" text-anchor="middle">1</text>
<text x="591.2" y="196" font-family="Liberation Sans" font-size="11" fill="#9a9a9a" textLength="61" lengthAdjust="spacing">PAGE SIZE</text>
<rect x="656.5" y="181.5" width="45.5" height="23" fill="#fff" stroke="#555" stroke-width="1.1"/>
<line x1="682.5" y1="182" x2="682.5" y2="204" stroke="#555" stroke-width="1.1"/>
<path d="M688.5,191.5 h7.6 l-3.8,4z" fill="#111"/>
<text x="658" y="196.6" font-family="Liberation Sans" font-size="11.5" fill="#444">20</text>
</svg>

<div class="a" style="left:433px;top:400px;width:702px;height:60px;border:1px solid #d8d8d8"></div>
<!-- ============ OVERLAY LINES ============ -->
<svg class="a" style="left:0;top:0" width="2130" height="764">
<g stroke="#6ab834" stroke-width="1.3" fill="none">
<line x1="174" y1="50" x2="220" y2="9"/>
<line x1="174" y1="122" x2="422" y2="7"/>
<line x1="174" y1="195" x2="439" y2="44"/>
<line x1="174" y1="267" x2="421" y2="88"/>
<line x1="174" y1="340" x2="432" y2="140"/>
<line x1="174" y1="412.5" x2="432" y2="403.5"/>
<line x1="174" y1="485" x2="437" y2="456"/>
</g>
</svg>
<svg class="a" style="left:0;top:0" width="215" height="520">
 <circle cx="174.2" cy="49.8" r="14" fill="#6ab834"/>
 <text x="170.2" y="54.8" font-family="Liberation Sans" font-weight="bold" font-size="14" fill="#fff" textLength="7" lengthAdjust="spacingAndGlyphs">1</text>
 <circle cx="174.2" cy="122.3" r="14" fill="#6ab834"/>
 <text x="170.2" y="127.3" font-family="Liberation Sans" font-weight="bold" font-size="14" fill="#fff" textLength="7" lengthAdjust="spacingAndGlyphs">2</text>
 <circle cx="174.2" cy="194.8" r="14" fill="#6ab834"/>
 <text x="170.2" y="199.8" font-family="Liberation Sans" font-weight="bold" font-size="14" fill="#fff" textLength="7" lengthAdjust="spacingAndGlyphs">3</text>
 <circle cx="174.2" cy="267.3" r="14" fill="#6ab834"/>
 <text x="170.2" y="272.3" font-family="Liberation Sans" font-weight="bold" font-size="14" fill="#fff" textLength="7" lengthAdjust="spacingAndGlyphs">4</text>
 <circle cx="174.2" cy="339.8" r="14" fill="#6ab834"/>
 <text x="170.2" y="344.8" font-family="Liberation Sans" font-weight="bold" font-size="14" fill="#fff" textLength="7" lengthAdjust="spacingAndGlyphs">5</text>
 <circle cx="174.2" cy="412.3" r="14" fill="#6ab834"/>
 <text x="170.2" y="417.3" font-family="Liberation Sans" font-weight="bold" font-size="14" fill="#fff" textLength="7" lengthAdjust="spacingAndGlyphs">6</text>
 <circle cx="174.2" cy="484.8" r="14" fill="#6ab834"/>
 <text x="170.2" y="489.8" font-family="Liberation Sans" font-weight="bold" font-size="14" fill="#fff" textLength="7" lengthAdjust="spacingAndGlyphs">7</text>
</svg>
</body></html>
